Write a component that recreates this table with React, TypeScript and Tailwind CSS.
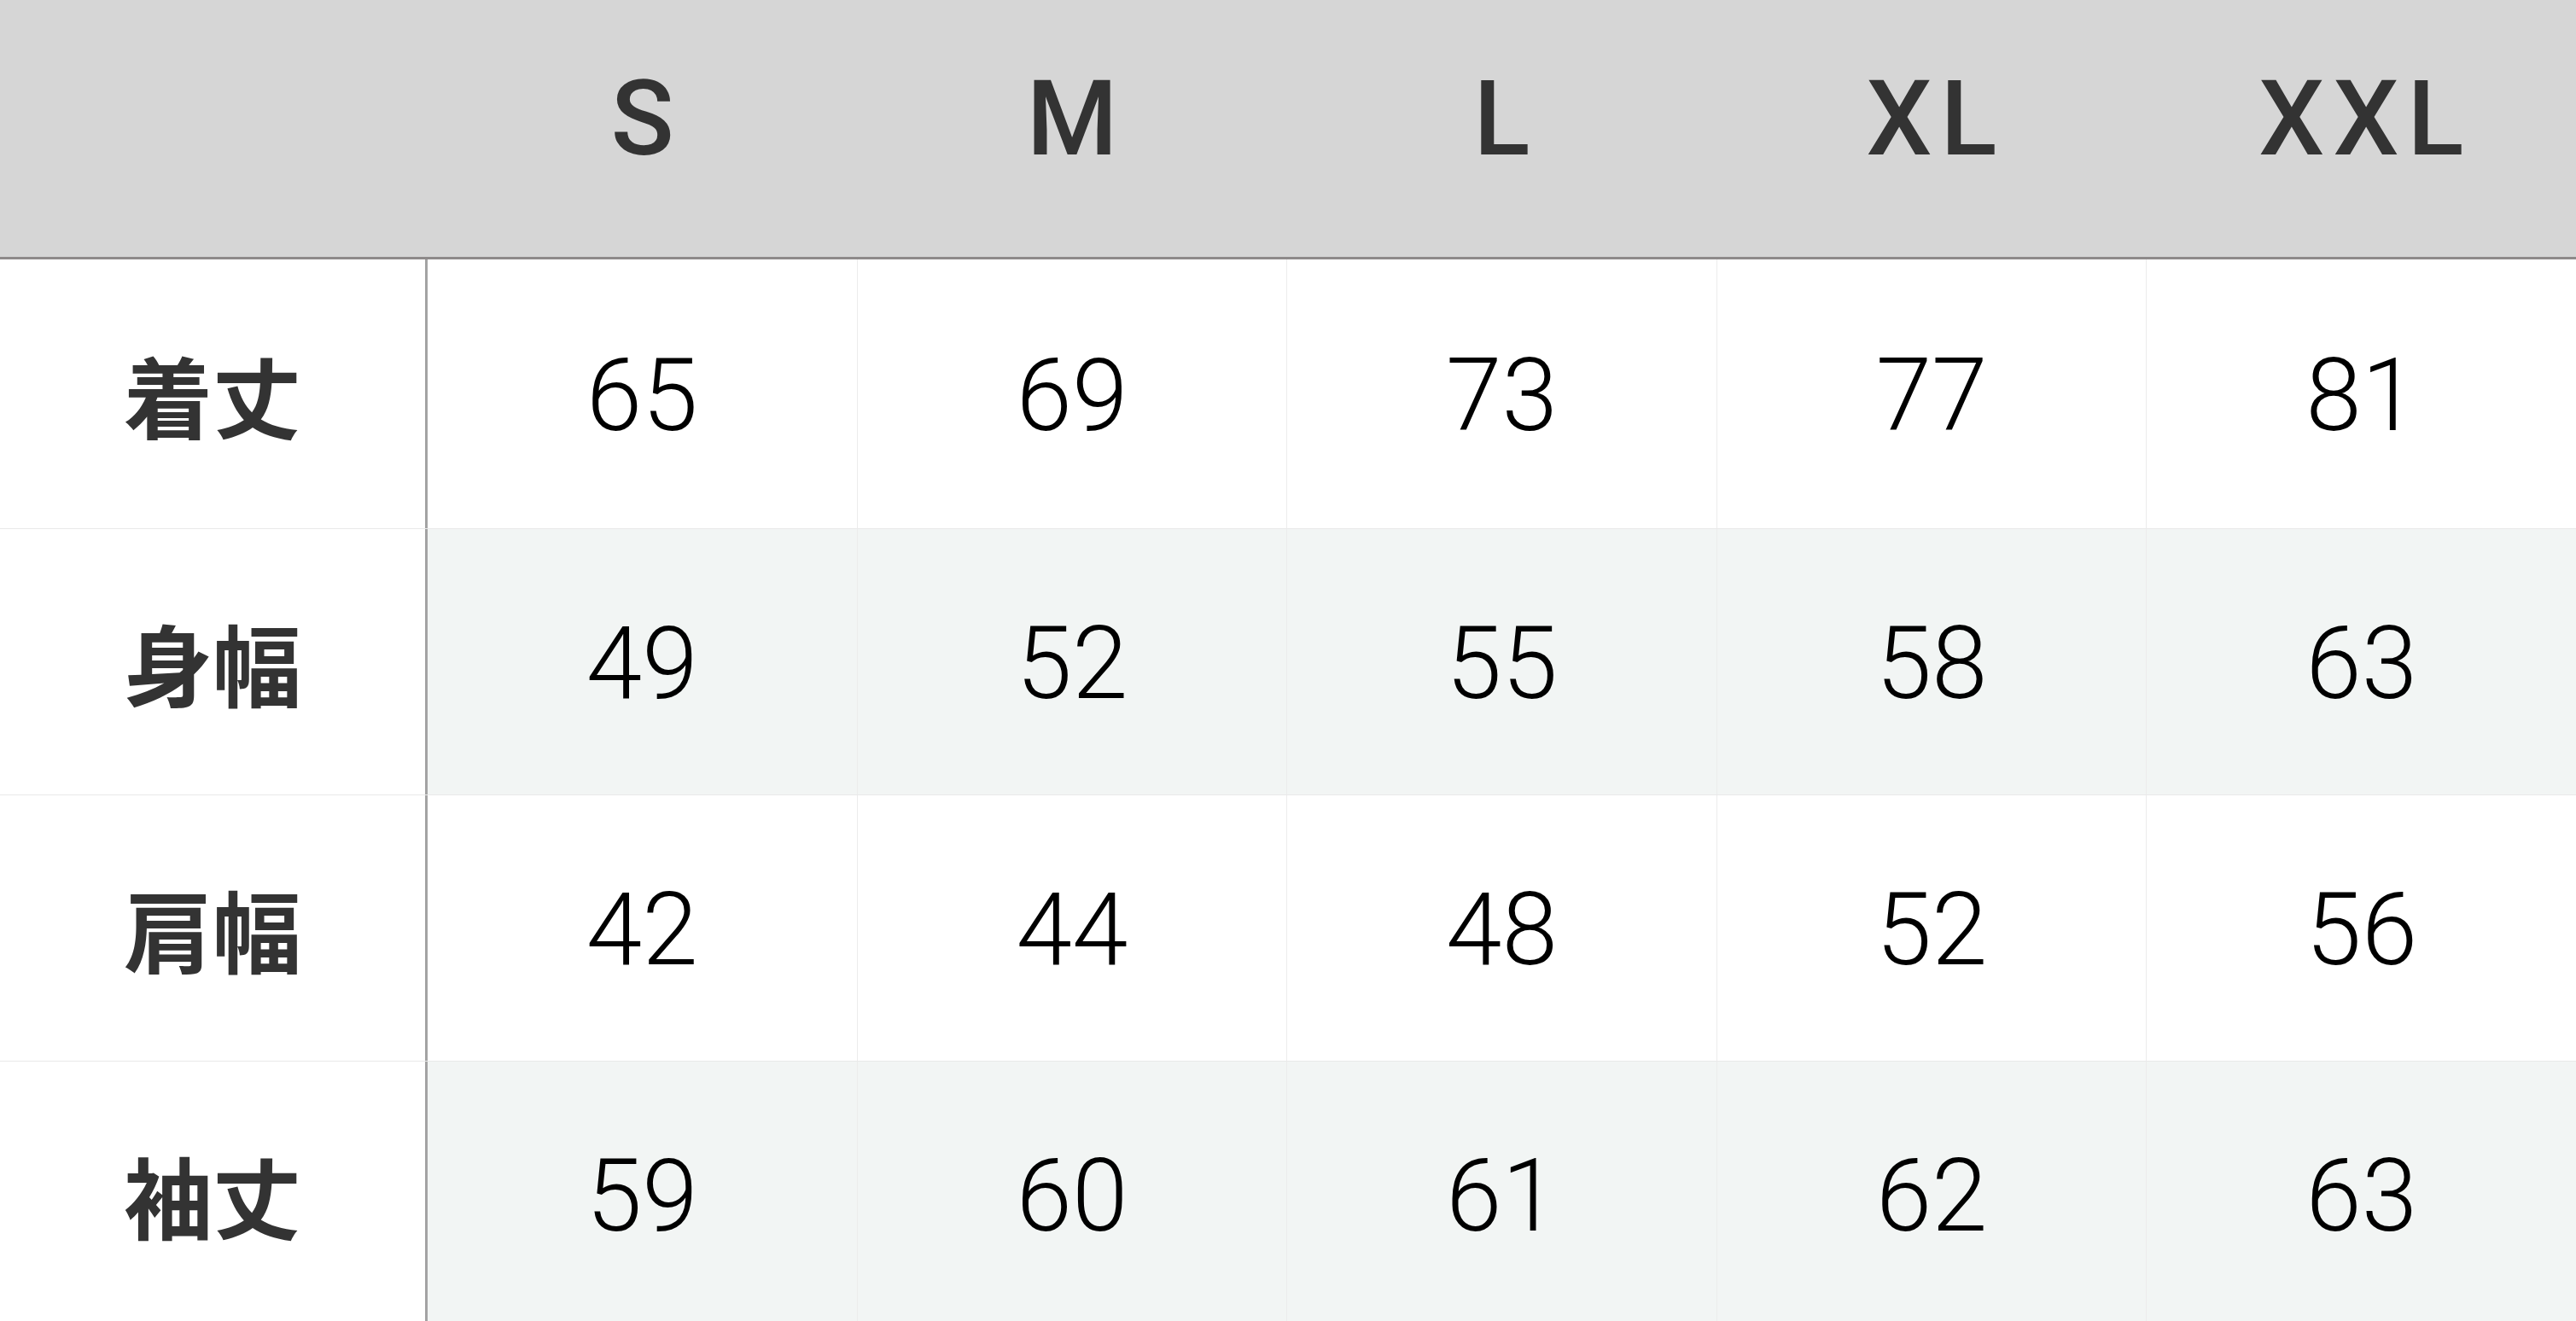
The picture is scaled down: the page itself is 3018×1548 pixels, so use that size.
import React from 'react';

const sizes = ['S', 'M', 'L', 'XL', 'XXL'];

const rows: { label: string; values: number[]; h: string }[] = [
  { label: '着丈', values: [65, 69, 73, 77, 81], h: 'h-[316px]' },
  { label: '身幅', values: [49, 52, 55, 58, 63], h: 'h-[312px]' },
  { label: '肩幅', values: [42, 44, 48, 52, 56], h: 'h-[312px]' },
  { label: '袖丈', values: [59, 60, 61, 62, 63], h: 'h-[312px]' },
];

export default function App() {
  return (
    <div className="w-[3018px] h-[1548px] overflow-hidden bg-white">
      {/* header */}
      <div className="flex h-[304px] bg-[#d6d6d6] border-b-[3px] border-[#8e8a8a]">
        <div className="w-[501px] shrink-0" />
        {sizes.map((s) => (
          <div
            key={s}
            className="flex-1 flex items-center justify-center pb-[22px] pl-[10px] text-[122px] leading-none font-medium tracking-[10px] text-[#333] font-['Roboto',Arial,sans-serif]"
          >
            {s}
          </div>
        ))}
      </div>

      {rows.map((r, i) => (
        <div key={r.label} className={`flex ${r.h} border-b border-[#e9e9e9]`}>
          <div className="w-[501px] shrink-0 flex items-center justify-center bg-white border-r-[3px] border-[#a3a3a3] text-[104px] leading-none font-bold text-[#333] font-['Noto_Sans_CJK_JP',sans-serif]">
            {r.label}
          </div>
          {r.values.map((v, j) => (
            <div
              key={j}
              className={`flex-1 flex items-center justify-center pt-[4px] text-[118px] leading-none font-light text-black font-['Roboto',Arial,sans-serif] ${
                j > 0 ? 'border-l border-[#ececec]' : ''
              } ${i % 2 === 1 ? 'bg-[#f2f5f4]' : 'bg-white'}`}
            >
              {v}
            </div>
          ))}
        </div>
      ))}
    </div>
  );
}
